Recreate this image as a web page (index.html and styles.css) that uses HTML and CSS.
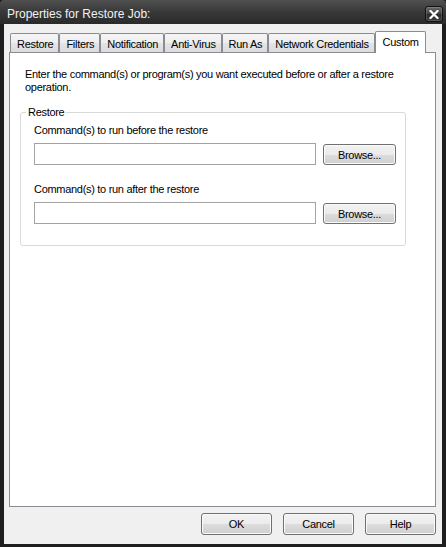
FILE: index.html
```html
<!DOCTYPE html>
<html lang="en">
<head>
  <meta charset="UTF-8" />
  <title>Properties for Restore Job:</title>
  <link rel="stylesheet" href="styles.css">
</head>
<body>
  <div class="window">
    <div class="titlebar">
      <span class="title">Properties for Restore Job:</span>
      <button class="close" title="Close">
        <svg width="10" height="9" viewBox="0 0 10 9">
          <path d="M1.5 1 L8.5 8 M8.5 1 L1.5 8" stroke="#fff" stroke-width="2.2" stroke-linecap="square" fill="none"/>
        </svg>
      </button>
    </div>

    <div class="client">
      <ul class="tabs">
        <li class="tab">Restore</li>
        <li class="tab">Filters</li>
        <li class="tab">Notification</li>
        <li class="tab">Anti-Virus</li>
        <li class="tab">Run As</li>
        <li class="tab">Network Credentials</li>
        <li class="tab active">Custom</li>
      </ul>

      <div class="panel">
        <p class="intro">Enter the command(s) or program(s) you want executed before or after a restore operation.</p>

        <fieldset class="group">
          <legend>Restore</legend>

          <label class="field-label" for="before">Command(s) to run before the restore</label>
          <div class="field-row">
            <input type="text" id="before" />
            <button class="btn">Browse...</button>
          </div>

          <label class="field-label second" for="after">Command(s) to run after the restore</label>
          <div class="field-row">
            <input type="text" id="after" />
            <button class="btn">Browse...</button>
          </div>
        </fieldset>
      </div>

      <div class="actions">
        <button class="btn">OK</button>
        <button class="btn">Cancel</button>
        <button class="btn">Help</button>
      </div>
    </div>
  </div>
</body>
</html>
```

FILE: styles.css
```css
* {
  box-sizing: border-box;
}

body {
  margin: 0;
  background: #1c1c1c;
  font-family: "Liberation Sans", Arial, sans-serif;
  font-size: 11px;
  letter-spacing: -0.3px;
  color: #000;
}

.window {
  width: 446px;
  height: 547px;
  display: flex;
  flex-direction: column;
  background: #1e1e1e;
  border-radius: 4px 4px 0 0;
  overflow: hidden;
}

/* title bar */
.titlebar {
  height: 24px;
  flex: none;
  display: flex;
  align-items: flex-start;
  justify-content: space-between;
  padding: 6px 3px 0 7px;
  background: linear-gradient(#505050, #383838 50%, #2a2a2a 100%);
}

.title {
  font-size: 12px;
  line-height: 16px;
  letter-spacing: 0;
  color: #f2f2f2;
}

.close {
  width: 18px;
  height: 16px;
  padding: 0;
  border: 1px solid #111;
  border-radius: 3px;
  background: linear-gradient(#6a6a6a, #404040 50%, #2c2c2c 51%, #3a3a3a);
  box-shadow: inset 0 0 0 1px rgba(255, 255, 255, 0.15);
  display: flex;
  align-items: center;
  justify-content: center;
}

/* dialog body */
.client {
  flex: 1;
  display: flex;
  flex-direction: column;
  margin: 0 4px 3px 4px;
  padding: 7px 6px 9px 5px;
  background: #f0f0f0;
}

.tabs {
  list-style: none;
  margin: 0 0 0 1px;
  padding: 0;
  height: 21px;
  display: flex;
  align-items: flex-end;
}

.tab {
  height: 19px;
  line-height: 20px;
  padding: 0 5px 0 6px;
  border: 1px solid #898c95;
  border-bottom: none;
  border-radius: 2px 2px 0 0;
  background: linear-gradient(#f5f5f5, #eeeeee 50%, #e4e4e4 51%, #dcdcdc);
  white-space: nowrap;
}

.tab.active {
  position: relative;
  z-index: 1;
  height: 22px;
  margin-bottom: -1px;
  padding: 0 6px 0 7px;
  line-height: 20px;
  background: #fff;
}

.panel {
  flex: 1;
  background: #fff;
  border: 1px solid #898c95;
  padding: 15px 10px 0 10px;
}

.intro {
  margin: 0 0 12px 5px;
  line-height: 13px;
}

.group {
  margin: 0 19px 0 0;
  padding: 5px 9px 21px 13px;
  border: 1px solid #d9d9d9;
  border-radius: 3px;
}

.group legend {
  padding: 0 2px;
  margin-left: -8px;
  line-height: 13px;
}

.field-label {
  display: block;
  line-height: 13px;
}

.field-label.second {
  margin-top: 18px;
}

.field-row {
  display: flex;
  align-items: flex-start;
  gap: 7px;
  margin-top: 6px;
}

.field-row input {
  width: 282px;
  height: 22px;
  margin: 0;
  border: 1px solid #a3a3a3;
  background: #fff;
  font: inherit;
}

.field-row .btn {
  width: 73px;
  height: 21px;
  margin-top: 1px;
}

.btn {
  height: 22px;
  padding: 0;
  border: 1px solid #707070;
  border-radius: 3px;
  background: linear-gradient(#f2f2f2, #ebebeb 50%, #dddddd 51%, #cfcfcf);
  box-shadow: inset 0 0 0 1px #fbfbfb;
  font: inherit;
  letter-spacing: inherit;
  color: #000;
}

.actions {
  flex: none;
  display: flex;
  justify-content: flex-end;
  gap: 11px;
  margin-top: 6px;
}

.actions .btn {
  width: 71px;
}
```
